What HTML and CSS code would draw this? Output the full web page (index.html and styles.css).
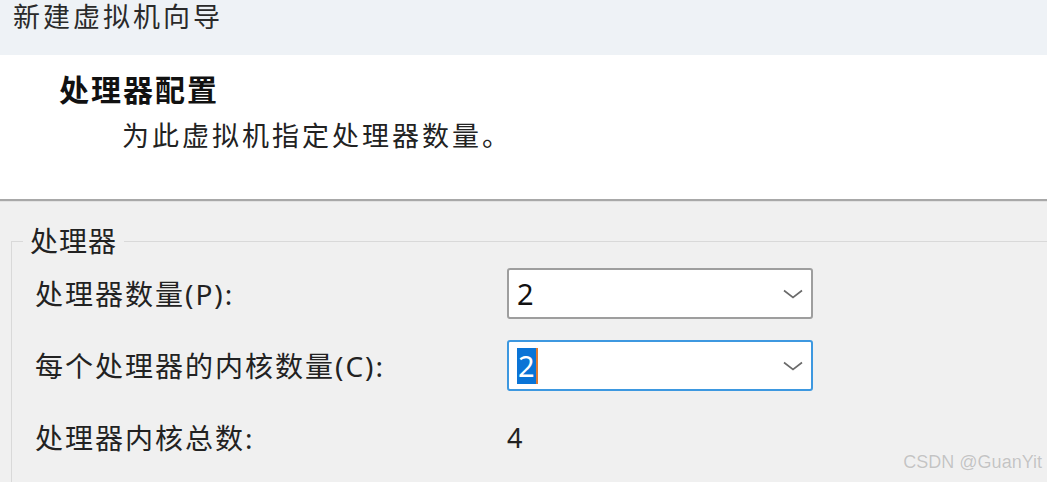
FILE: index.html
```html
<!DOCTYPE html>
<html lang="zh-CN">
<head>
<meta charset="utf-8">
<title>新建虚拟机向导</title>
<link rel="stylesheet" href="styles.css">
</head>
<body>
<div class="window">
  <div class="titlebar">新建虚拟机向导</div>
  <div class="header">
    <div class="heading">处理器配置</div>
    <div class="subtitle">为此虚拟机指定处理器数量。</div>
  </div>
  <div class="content">
    <fieldset class="group">
      <legend class="legend">处理器</legend>
      <div class="grid">
        <div class="label">处理器数量(P):</div>
        <div class="combo">
          <span class="value">2</span>
          <svg class="chevron" width="20" height="10" viewBox="0 0 20 10"><path d="M1 1.5 L10 8.5 L19 1.5" fill="none" stroke="#6a6a6a" stroke-width="1.6"/></svg>
        </div>
        <div class="label">每个处理器的内核数量(C):</div>
        <div class="combo focused">
          <span class="value"><span class="selected">2</span><span class="caret"></span></span>
          <svg class="chevron" width="20" height="10" viewBox="0 0 20 10"><path d="M1 1.5 L10 8.5 L19 1.5" fill="none" stroke="#6a6a6a" stroke-width="1.6"/></svg>
        </div>
        <div class="label">处理器内核总数:</div>
        <div class="total">4</div>
      </div>
    </fieldset>
    <div class="watermark">CSDN @GuanYit</div>
  </div>
</div>
</body>
</html>
```
FILE: styles.css
```css
html, body {
  margin: 0;
  padding: 0;
}
body {
  width: 1047px;
  height: 482px;
  overflow: hidden;
  font-family: "Noto Sans", "Noto Sans CJK SC", sans-serif;
  color: #1a1a1a;
}
.window {
  display: flex;
  flex-direction: column;
  height: 482px;
}
.titlebar {
  flex-shrink: 0;
  height: 55px;
  box-sizing: border-box;
  background: #eef2f6;
  padding-left: 13px;
  font-size: 27px;
  line-height: 34px;
  letter-spacing: 3px;
  color: #2a2a2a;
}
.header {
  flex-shrink: 0;
  height: 146px;
  background: #ffffff;
  box-sizing: border-box;
  padding-top: 15px;
  border-bottom: 2px solid #a8a8a8;
}
.heading {
  padding-left: 59px;
  font-size: 30px;
  font-weight: 700;
  line-height: 40px;
  letter-spacing: 2px;
  color: #111;
}
.subtitle {
  padding-left: 122px;
  margin-top: 6px;
  font-size: 27px;
  line-height: 40px;
  letter-spacing: 3px;
  color: #222;
}
.content {
  position: relative;
  flex: 1;
  min-height: 0;
  overflow: hidden;
  background: #f0f0f0;
  border-top: 1px solid #e2e2e2;
  padding-top: 22px;
}
.group {
  margin: 0 -20px 0 11px;
  padding: 0;
  border: 1px solid #d9d9d9;
  border-right: none;
  border-bottom: none;
  min-width: 0;
  height: 260px;
  box-sizing: border-box;
}
.legend {
  margin-left: 11px;
  padding: 0 7px;
  font-size: 28px;
  line-height: 34px;
  letter-spacing: 1px;
  color: #222;
}
.grid {
  display: grid;
  grid-template-columns: 472px 306px;
  grid-auto-rows: 51px;
  row-gap: 21px;
  padding: 10px 0 0 23px;
}
.label {
  align-self: center;
  font-size: 28px;
  line-height: 34px;
  letter-spacing: 2px;
  color: #222;
}
.combo {
  display: flex;
  align-items: center;
  justify-content: space-between;
  box-sizing: border-box;
  border: 2px solid #9e9e9e;
  border-radius: 3px;
  background: #ffffff;
  padding: 0 8px 0 8px;
}
.combo.focused {
  border-color: #3d98e0;
}
.value {
  display: flex;
  align-items: center;
  font-size: 29px;
  line-height: 36px;
  color: #111;
}
.selected {
  background: #0a74d6;
  color: #ffffff;
  padding: 0 1px;
}
.caret {
  width: 2px;
  height: 36px;
  background: #e07a30;
}
.chevron {
  display: block;
}
.total {
  align-self: center;
  font-size: 27px;
  line-height: 34px;
  color: #222;
}
.watermark {
  position: absolute;
  right: 5px;
  bottom: 9px;
  font-family: "Liberation Sans", sans-serif;
  font-size: 18px;
  color: #c4c4c4;
  text-shadow: 0 0 1px #ffffff;
}
```
